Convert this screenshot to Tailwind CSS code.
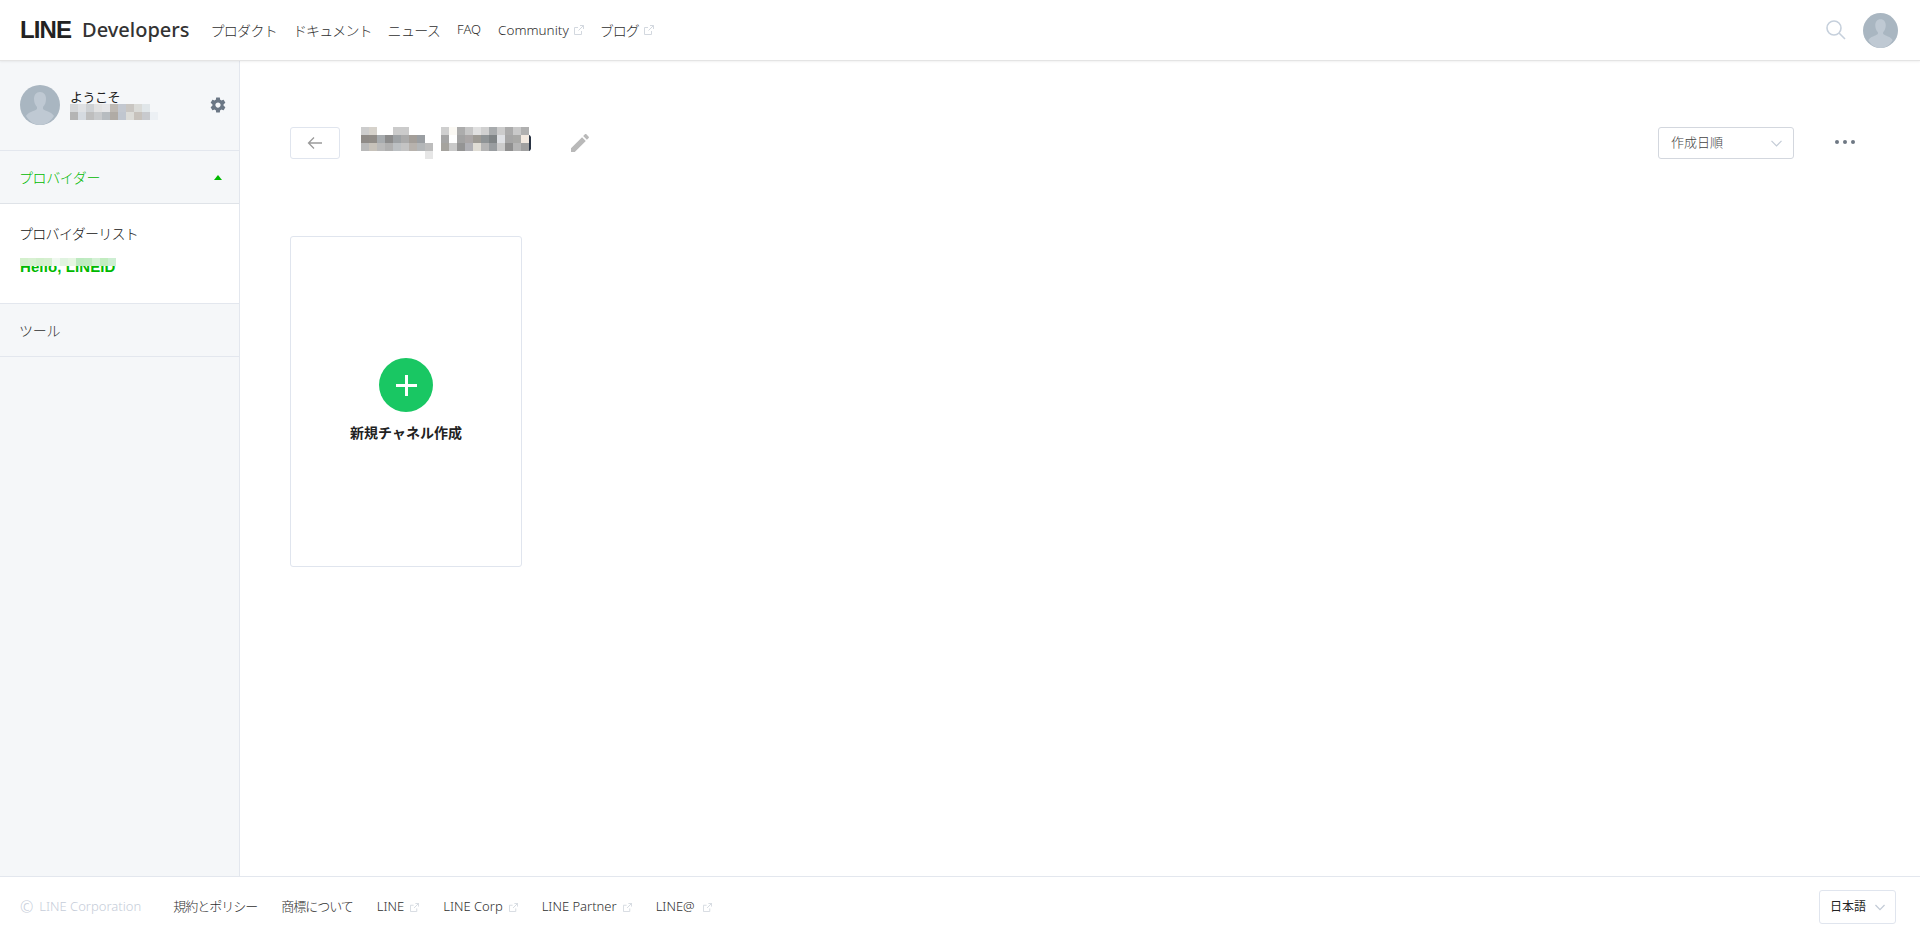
<!doctype html>
<html lang="ja">
<head>
<meta charset="utf-8" />
<title>LINE Developers</title>
<script src="https://cdn.jsdelivr.net/npm/@tailwindcss/browser@4"></script>
</head>
<body class="h-screen flex flex-col overflow-hidden bg-white text-[#2f2f2f] text-[14px] font-['Noto_Sans','Noto_Sans_CJK_JP',sans-serif]">
  <!-- header -->
  <header class="relative z-10 h-[61px] shrink-0 flex items-center pl-5 pr-[22px] border-b border-[#e4e4e4] shadow-[0_1px_2px_rgba(0,0,0,0.06)]">
    <span class="text-[24px] leading-none font-black tracking-[-0.9px] text-[#222] font-['Liberation_Sans',sans-serif]">LINE</span>
    <span class="ml-3 -translate-x-px text-[20px] leading-none font-medium text-[#333]">Developers</span>
    <nav class="ml-5 flex items-center gap-4 font-light">
      <a class="tracking-[-0.7px]">プロダクト</a>
      <a class="tracking-[-0.9px]">ドキュメント</a>
      <a class="tracking-[-0.7px]">ニュース</a>
      <a class="ml-px text-[13px]">FAQ</a>
      <a class="ml-px flex items-center gap-[5px] text-[13.500px]">Community
        <svg class="w-[10px] h-[10px] text-[#d3d8df]" viewBox="0 0 10 10" fill="none" stroke="currentColor"><path d="M7.500 6v3.500h-7v-7H4M6 .5h3.500V4M9.500.5 4.500 5.500"/></svg>
      </a>
      <a class="flex items-center gap-[5px] tracking-[-1px]">ブログ
        <svg class="w-[10px] h-[10px] text-[#d3d8df]" viewBox="0 0 10 10" fill="none" stroke="currentColor"><path d="M7.500 6v3.500h-7v-7H4M6 .5h3.500V4M9.500.5 4.500 5.500"/></svg>
      </a>
    </nav>
    <div class="ml-auto flex items-center gap-[17px]">
      <svg class="w-5 h-5 text-[#c6d0dc]" viewBox="0 0 20 20" fill="none" stroke="currentColor" stroke-width="1.600"><circle cx="8" cy="8" r="7"/><path d="M13 13l6 6"/></svg>
      <svg class="w-[35px] h-[35px] rounded-full" viewBox="0 0 40 40"><rect width="40" height="40" fill="#a9b6c1"/><path d="M20 7c-4 0-6 3-6 7 0 3 1 6 3 8v2c-2 2-9 3-11 7 3 5 8 9 14 9s11-4 14-9c-2-4-9-5-11-7v-2c2-2 3-5 3-8 0-4-2-7-6-7z" fill="#bfc9d3"/></svg>
    </div>
  </header>

  <div class="flex-1 min-h-0 flex">
    <!-- sidebar -->
    <aside class="w-[240px] shrink-0 bg-[#f5f7f9] border-r border-[#e3e7ee] flex flex-col">
      <div class="h-[90px] px-5 pb-[2px] flex items-center border-b border-[#e3e7ee]">
        <svg class="w-10 h-10 rounded-full shrink-0" viewBox="0 0 40 40"><rect width="40" height="40" fill="#a9b6c1"/><path d="M20 7c-4 0-6 3-6 7 0 3 1 6 3 8v2c-2 2-9 3-11 7 3 5 8 9 14 9s11-4 14-9c-2-4-9-5-11-7v-2c2-2 3-5 3-8 0-4-2-7-6-7z" fill="#bfc9d3"/></svg>
        <div class="ml-[10px] flex-1">
          <p class="text-[13px] leading-[14px] text-[#222] tracking-[-0.5px]">ようこそ</p>
          <svg class="block w-[88px] h-4" viewBox="0 0 88 16" shape-rendering="crispEdges">
            <rect width="8" height="8" fill="#d4d6d8"/><rect x="8" width="8" height="8" fill="#dfe1e4"/><rect x="16" width="8" height="8" fill="#ced1d4"/><rect x="24" width="8" height="8" fill="#e2e2e2"/><rect x="32" width="8" height="8" fill="#e5e6e8"/><rect x="40" width="8" height="8" fill="#beb9b3"/><rect x="48" width="8" height="8" fill="#c3c8d0"/><rect x="56" width="8" height="8" fill="#c9c6c2"/><rect x="64" width="8" height="8" fill="#dadbd8"/><rect x="72" width="8" height="8" fill="#e0e6e9"/>
            <rect y="8" width="8" height="8" fill="#b4b4b4"/><rect x="8" y="8" width="8" height="8" fill="#d5dae0"/><rect x="16" y="8" width="8" height="8" fill="#bebebe"/><rect x="24" y="8" width="8" height="8" fill="#c8cacc"/><rect x="32" y="8" width="8" height="8" fill="#b7bcc0"/><rect x="40" y="8" width="8" height="8" fill="#b0aba5"/><rect x="48" y="8" width="8" height="8" fill="#c0c6cf"/><rect x="56" y="8" width="8" height="8" fill="#dcdcd8"/><rect x="64" y="8" width="8" height="8" fill="#c7c2bc"/><rect x="72" y="8" width="8" height="8" fill="#c8cace"/><rect x="80" y="8" width="8" height="8" fill="#ecf0f4"/>
          </svg>
        </div>
        <svg class="w-[18px] h-[18px] text-[#6b7785] -mr-[8px]" viewBox="0 0 24 24" fill="currentColor"><path d="M19.430 12.980c.040-.320.070-.640.070-.980s-.030-.660-.070-.980l2.110-1.650c.190-.150.240-.420.120-.640l-2-3.460c-.120-.220-.390-.300-.610-.220l-2.490 1c-.520-.400-1.080-.730-1.690-.980l-.380-2.650C14.460 2.180 14.250 2 14 2h-4c-.250 0-.460.180-.490.420l-.380 2.650c-.610.250-1.170.590-1.690.980l-2.490-1c-.230-.090-.490 0-.610.220l-2 3.460c-.130.220-.070.490.120.640l2.110 1.650c-.040.320-.070.650-.070.980s.030.660.070.980l-2.110 1.650c-.190.150-.240.420-.120.640l2 3.460c.120.220.390.300.610.220l2.490-1c.520.400 1.080.730 1.690.980l.380 2.650c.030.240.240.420.490.420h4c.250 0 .460-.180.490-.420l.380-2.650c.610-.250 1.170-.590 1.690-.980l2.490 1c.230.090.490 0 .610-.220l2-3.460c.120-.220.070-.490-.120-.640l-2.110-1.650zM12 15.500c-1.930 0-3.500-1.570-3.500-3.500s1.570-3.500 3.500-3.500 3.500 1.570 3.500 3.500-1.570 3.500-3.500 3.500z"/></svg>
      </div>
      <div class="h-[53px] pl-[19px] pr-[17px] flex items-center justify-between font-light text-[#00b900] border-b border-[#dfe3e8] shadow-[0_1px_1px_rgba(0,0,0,0.04)] tracking-[-0.4px]">
        <span>プロバイダー</span>
        <span class="w-0 h-0 border-x-4 border-x-transparent border-b-[5px] border-b-[#00b900]"></span>
      </div>
      <div class="h-[100px] bg-white pl-[19px] pr-5 pt-5 border-b border-[#e3e7ee]">
        <p class="leading-5 font-light text-[#111] tracking-[-0.7px]">プロバイダーリスト</p>
        <div class="relative mt-[14px] ml-px h-4 w-24">
          <p class="absolute left-0 top-[1px] text-[15px] leading-4 tracking-[0.1px] font-bold text-[#00b900] font-['Liberation_Sans',sans-serif]">Hello, LINEID</p>
          <svg class="absolute left-0 top-0 w-24 h-2" viewBox="0 0 96 8" shape-rendering="crispEdges">
            <rect width="8" height="8" fill="#d4f0cd"/><rect x="8" width="8" height="8" fill="#d8f0d2"/><rect x="16" width="8" height="8" fill="#d2efcc"/><rect x="24" width="8" height="8" fill="#d6efd0"/><rect x="32" width="8" height="8" fill="#f0f8f0"/><rect x="40" width="8" height="8" fill="#e0f3e0"/><rect x="48" width="8" height="8" fill="#e6f6e2"/><rect x="56" width="8" height="8" fill="#bdeac0"/><rect x="64" width="8" height="8" fill="#c0ebc2"/><rect x="72" width="8" height="8" fill="#d5f1d6"/><rect x="80" width="8" height="8" fill="#c2ecc0"/><rect x="88" width="8" height="8" fill="#cdeed2"/>
          </svg>
        </div>
      </div>
      <div class="h-[53px] pl-[19px] pr-5 flex items-center font-light border-b border-[#e3e7ee] tracking-[-0.2px]">ツール</div>
    </aside>

    <!-- main -->
    <main class="flex-1 min-w-0 pl-[50px] pr-[64px] pt-[66px]">
      <div class="flex items-center h-8">
        <button class="w-[50px] h-8 flex items-center justify-center bg-white border border-[#e0e5ee] rounded-[3px]">
          <svg class="w-4 h-4 text-[#9a9a9a]" viewBox="0 0 16 16" fill="none" stroke="currentColor" stroke-width="1.300"><path d="M15 8H1.500M7 2.500 1.500 8 7 13.500"/></svg>
        </button>
        <svg class="block ml-[21px] w-[170px] h-8" viewBox="0 0 170 32" shape-rendering="crispEdges">
          <rect y="0" width="8" height="8" fill="#cdcdcd"/><rect x="8" y="0" width="8" height="8" fill="#d6d2cb"/><rect x="32" y="0" width="16" height="8" fill="#cbcbcb"/>
          <rect x="80" y="0" width="8" height="8" fill="#cfcfcf"/><rect x="88" y="0" width="8" height="8" fill="#fbf9f4"/><rect x="96" y="0" width="8" height="8" fill="#acacac"/><rect x="104" y="0" width="8" height="8" fill="#c6c6c6"/><rect x="112" y="0" width="8" height="8" fill="#e0e0e0"/><rect x="120" y="0" width="8" height="8" fill="#d0d0d0"/><rect x="128" y="0" width="8" height="8" fill="#a8abad"/><rect x="136" y="0" width="8" height="8" fill="#cccccc"/><rect x="144" y="0" width="8" height="8" fill="#ababab"/><rect x="152" y="0" width="8" height="8" fill="#c9c9c9"/><rect x="160" y="0" width="8" height="8" fill="#b0b0b0"/>
          <rect y="8" width="8" height="8" fill="#8f8b87"/><rect x="8" y="8" width="8" height="8" fill="#918d88"/><rect x="16" y="8" width="8" height="8" fill="#a7abae"/><rect x="24" y="8" width="8" height="8" fill="#8c8c8c"/><rect x="32" y="8" width="8" height="8" fill="#9ea2a5"/><rect x="40" y="8" width="8" height="8" fill="#ababab"/><rect x="48" y="8" width="8" height="8" fill="#a39e99"/><rect x="56" y="8" width="8" height="8" fill="#9a9ea2"/>
          <rect x="80" y="8" width="8" height="8" fill="#a5a5a5"/><rect x="96" y="8" width="8" height="8" fill="#a2a2a2"/><rect x="104" y="8" width="8" height="8" fill="#aaa6a6"/><rect x="112" y="8" width="8" height="8" fill="#9e9b95"/><rect x="120" y="8" width="8" height="8" fill="#8f9496"/><rect x="128" y="8" width="8" height="8" fill="#7f8486"/><rect x="136" y="8" width="8" height="8" fill="#dfe1e5"/><rect x="144" y="8" width="8" height="8" fill="#a6a6a6"/><rect x="152" y="8" width="8" height="8" fill="#a9a9a7"/><rect x="160" y="8" width="8" height="8" fill="#f2e9e0"/>
          <rect y="16" width="8" height="8" fill="#b9b9b9"/><rect x="8" y="16" width="8" height="8" fill="#c7c2ba"/><rect x="16" y="16" width="8" height="8" fill="#bababa"/><rect x="24" y="16" width="8" height="8" fill="#b0b0b0"/><rect x="32" y="16" width="8" height="8" fill="#bcc0c3"/><rect x="40" y="16" width="8" height="8" fill="#c4c4c4"/><rect x="48" y="16" width="8" height="8" fill="#b7b2ad"/><rect x="56" y="16" width="8" height="8" fill="#b3b6b8"/><rect x="64" y="16" width="8" height="8" fill="#bdbdbd"/>
          <rect x="80" y="16" width="8" height="8" fill="#a5a39e"/><rect x="88" y="16" width="8" height="8" fill="#c9c9c9"/><rect x="96" y="16" width="8" height="8" fill="#949494"/><rect x="104" y="16" width="8" height="8" fill="#b0b0b5"/><rect x="112" y="16" width="8" height="8" fill="#e0ddd5"/><rect x="120" y="16" width="8" height="8" fill="#b5b5b5"/><rect x="128" y="16" width="8" height="8" fill="#999da0"/><rect x="136" y="16" width="8" height="8" fill="#cbcbcb"/><rect x="144" y="16" width="8" height="8" fill="#8f8f8f"/><rect x="152" y="16" width="8" height="8" fill="#b5b5b5"/><rect x="160" y="16" width="8" height="8" fill="#a0a0a0"/>
          <rect x="64" y="24" width="8" height="8" fill="#e6e6e6"/>
          <path d="M168 8a3 8 0 0 1 0 16z" fill="#2a3444" shape-rendering="auto"/>
        </svg>
        <svg class="ml-[37px] w-6 h-6 text-[#b9b9b9]" viewBox="0 0 24 24" fill="currentColor"><path d="M3 17.250V21h3.750L17.810 9.940l-3.750-3.750L3 17.250zM20.710 7.040c.390-.390.390-1.020 0-1.410l-2.340-2.340c-.390-.390-1.020-.390-1.410 0l-1.830 1.830 3.750 3.750 1.830-1.830z"/></svg>
        <div class="ml-auto w-[136px] h-8 pl-[12px] pr-[11px] flex items-center justify-between border border-[#d3d7de] rounded-[3px] text-[13px] font-light text-[#444]">
          <span>作成日順</span>
          <svg class="w-[11px] h-[7px] text-[#c3cbd6]" viewBox="0 0 11 7" fill="none" stroke="currentColor" stroke-width="1.200"><path d="M.5.800 5.500 5.800 10.500.8"/></svg>
        </div>
        <div class="ml-[41px] mr-[1px] flex gap-[4px] -mt-[3px]">
          <span class="w-[4px] h-[4px] rounded-full bg-[#6e7883]"></span><span class="w-[4px] h-[4px] rounded-full bg-[#6e7883]"></span><span class="w-[4px] h-[4px] rounded-full bg-[#6e7883]"></span>
        </div>
      </div>

      <div class="mt-[77px] w-[232px] h-[331px] border border-[#e0e5ee] rounded-[3px] flex flex-col items-center pt-[121px]">
        <span class="w-[54px] h-[54px] rounded-full bg-[#19c763] flex items-center justify-center">
          <svg class="w-[21px] h-[21px] text-white" viewBox="0 0 21 21" fill="none" stroke="currentColor" stroke-width="3"><path d="M10.500 0v21M0 10.500h21"/></svg>
        </span>
        <p class="mt-[11px] text-[14px] leading-5 font-bold text-[#222]">新規チャネル作成</p>
      </div>
    </main>
  </div>

  <!-- footer -->
  <footer class="h-[61px] shrink-0 flex items-center pl-5 pr-6 border-t border-[#e3e7ee] text-[13px] font-light">
    <span class="flex items-center text-[#c6cdd9]"><span class="text-[16px] leading-none">©</span><span class="ml-[6px]">LINE Corporation</span></span>
    <nav class="ml-8 flex items-center gap-6">
      <a class="tracking-[-1px]">規約とポリシー</a>
      <a class="tracking-[-1px]">商標について</a>
      <a class="flex items-center gap-[6px]">LINE
        <svg class="w-[9px] h-[9px] text-[#d3d8df]" viewBox="0 0 10 10" fill="none" stroke="currentColor"><path d="M7.500 6v3.500h-7v-7H4M6 .5h3.500V4M9.500.5 4.500 5.500"/></svg>
      </a>
      <a class="flex items-center gap-[6px]">LINE Corp
        <svg class="w-[9px] h-[9px] text-[#d3d8df]" viewBox="0 0 10 10" fill="none" stroke="currentColor"><path d="M7.500 6v3.500h-7v-7H4M6 .5h3.500V4M9.500.5 4.500 5.500"/></svg>
      </a>
      <a class="flex items-center gap-[6px]">LINE Partner
        <svg class="w-[9px] h-[9px] text-[#d3d8df]" viewBox="0 0 10 10" fill="none" stroke="currentColor"><path d="M7.500 6v3.500h-7v-7H4M6 .5h3.500V4M9.500.5 4.500 5.500"/></svg>
      </a>
      <a class="flex items-center gap-[8px]">LINE@
        <svg class="w-[9px] h-[9px] text-[#d3d8df]" viewBox="0 0 10 10" fill="none" stroke="currentColor"><path d="M7.500 6v3.500h-7v-7H4M6 .5h3.500V4M9.500.5 4.500 5.500"/></svg>
      </a>
    </nav>
    <div class="ml-auto w-[77px] h-[34px] pl-[10px] pr-[10px] flex items-center justify-between border border-[#e0e5ee] rounded-[3px] text-[12px] font-normal text-[#222]">
      <span>日本語</span>
      <svg class="w-[10px] h-[7px] text-[#c3cbd6]" viewBox="0 0 11 7" fill="none" stroke="currentColor" stroke-width="1.400"><path d="M.5.800 5.500 5.800 10.500.8"/></svg>
    </div>
  </footer>
</body>
</html>
